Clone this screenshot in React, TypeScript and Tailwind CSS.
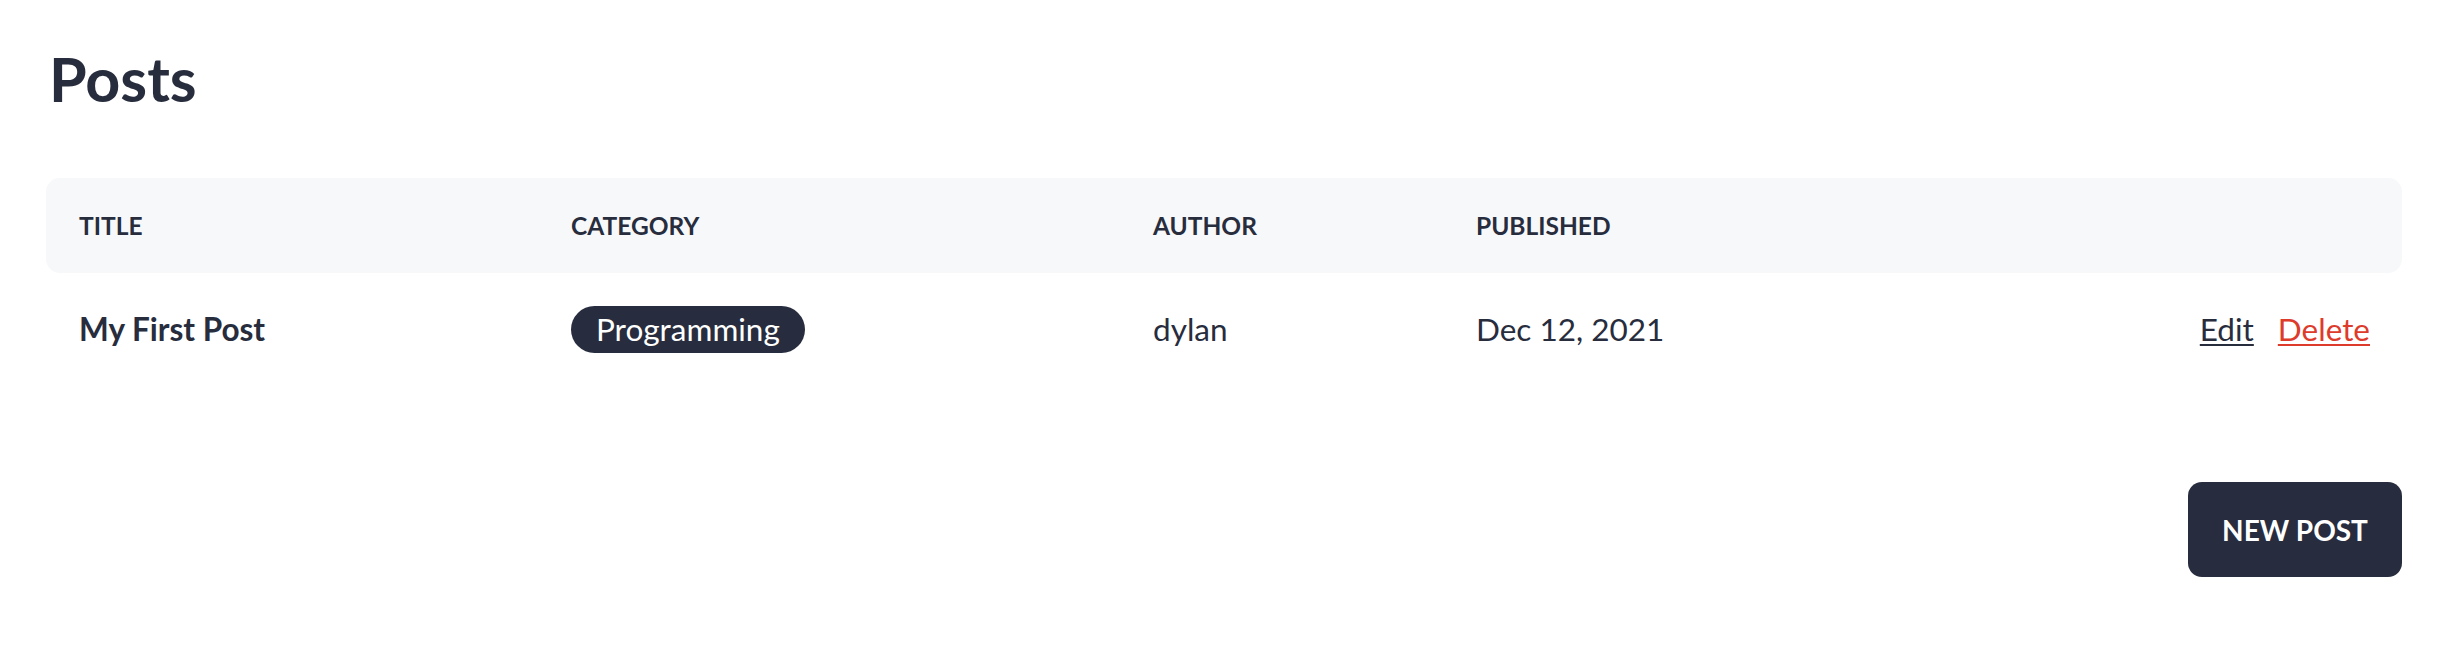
import React from 'react';

interface Post {
  title: string;
  category: string;
  author: string;
  published: string;
}

const posts: Post[] = [
  { title: 'My First Post', category: 'Programming', author: 'dylan', published: 'Dec 12, 2021' },
];

const columns = ['Title', 'Category', 'Author', 'Published'];

export default function App() {
  return (
    <div className="min-h-screen bg-white pl-[46px] pr-[52px] pt-[44px] text-[#272d3d] font-['Lato',sans-serif]">
      <h1 className="text-[61px] leading-[70px] font-bold pl-[3px]">Posts</h1>

      {/* Table */}
      <div className="mt-[64px]">
        <div className="grid grid-cols-[492px_582px_323px_1fr_auto] h-[95px] items-center bg-[#f7f8fa] rounded-[14px]">
          {columns.map((col) => (
            <div key={col} className="pl-[33px] text-[24.5px] leading-[35px] font-bold uppercase">
              {col}
            </div>
          ))}
          <div />
        </div>

        {posts.map((post) => (
          <div
            key={post.title}
            className="grid grid-cols-[492px_582px_323px_1fr_auto] h-[113px] items-center text-[31.5px] leading-[47px]"
          >
            <div className="pl-[33px] font-bold">{post.title}</div>
            <div className="pl-[33px]">
              <span className="inline-flex h-[47px] items-center rounded-full bg-[#272d3e] px-[25px] text-white">
                {post.category}
              </span>
            </div>
            <div className="pl-[33px]">{post.author}</div>
            <div className="pl-[33px]">{post.published}</div>
            <div className="flex justify-end gap-[24px] pr-[32px]">
              <a href="#" className="underline decoration-2 underline-offset-[3px]">
                Edit
              </a>
              <a href="#" className="text-[#dd3b2b] underline decoration-2 underline-offset-[3px]">
                Delete
              </a>
            </div>
          </div>
        ))}
      </div>

      <div className="flex justify-end mt-[96px]">
        <button className="h-[95px] w-[214px] rounded-[14px] bg-[#272d3e] text-[28px] font-bold uppercase text-white">
          New Post
        </button>
      </div>
    </div>
  );
}
